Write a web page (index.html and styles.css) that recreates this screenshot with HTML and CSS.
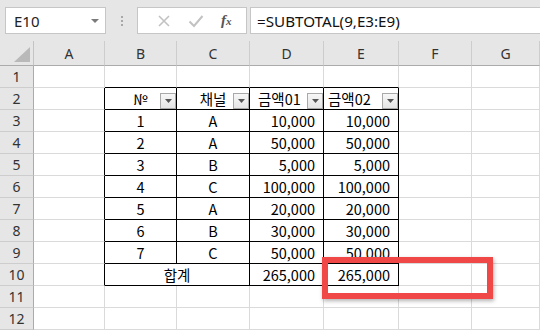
FILE: index.html
```html
<!DOCTYPE html>
<html lang="ko">
<head>
<meta charset="utf-8">
<title>SUBTOTAL</title>
<link rel="stylesheet" href="styles.css">
</head>
<body>

<div class="topbar">
	<div class="namebox">
		<span>E10</span>
		<svg class="drop" width="8" height="4" viewBox="0 0 8 4"><path d="M0 0h8L4 4z" fill="#7a7a7a"/></svg>
	</div>
	<div class="grip">
		<i></i><i></i><i></i>
	</div>
	<div class="fxbtns">
		<svg width="14" height="14" viewBox="0 0 14 14"><path d="M2 2l10 10M12 2L2 12" stroke="#c2c2c2" stroke-width="1.6" fill="none"/></svg>
		<svg width="16" height="14" viewBox="0 0 16 14"><path d="M1.5 7.5l4.5 4.5 8.5-10" stroke="#c2c2c2" stroke-width="2" fill="none"/></svg>
		<span class="fx">f<small>x</small></span>
	</div>
	<div class="formula">=SUBTOTAL(9,E3:E9)</div>
</div><!-- topbar -->

<div class="sheet">
	<!-- column headers -->
	<div class="corner"><svg width="16" height="15" viewBox="0 0 16 15"><path d="M16 0v15H0z" fill="#b9b9b9"/></svg></div>
	<div class="h">A</div><div class="h">B</div><div class="h">C</div><div class="h">D</div><div class="h">E</div><div class="h">F</div><div class="h">G</div>

	<!-- 1 -->
	<div class="r">1</div>
	<div class="c"></div><div class="c tt"></div><div class="c tt"></div><div class="c tt"></div><div class="c tt"></div><div class="c"></div><div class="c"></div>

	<!-- 2 : table header -->
	<div class="r">2</div>
	<div class="c tl"></div>
	<div class="c t hd mid">№<span class="flt"><svg width="7" height="4" viewBox="0 0 7 4"><path d="M0 0h7L3.5 4z" fill="#555"/></svg></span></div>
	<div class="c t hd mid">채널<span class="flt"><svg width="7" height="4" viewBox="0 0 7 4"><path d="M0 0h7L3.5 4z" fill="#555"/></svg></span></div>
	<div class="c t hd pl8">금액01<span class="flt"><svg width="7" height="4" viewBox="0 0 7 4"><path d="M0 0h7L3.5 4z" fill="#555"/></svg></span></div>
	<div class="c t hd pl4">금액02<span class="flt"><svg width="7" height="4" viewBox="0 0 7 4"><path d="M0 0h7L3.5 4z" fill="#555"/></svg></span></div>
	<div class="c"></div><div class="c"></div>

	<div class="r">3</div>
	<div class="c tl"></div><div class="c t mid">1</div><div class="c t mid">A</div><div class="c t num">10,000</div><div class="c t num">10,000</div><div class="c"></div><div class="c"></div>

	<div class="r">4</div>
	<div class="c tl"></div><div class="c t mid">2</div><div class="c t mid">A</div><div class="c t num">50,000</div><div class="c t num">50,000</div><div class="c"></div><div class="c"></div>

	<div class="r">5</div>
	<div class="c tl"></div><div class="c t mid">3</div><div class="c t mid">B</div><div class="c t num">5,000</div><div class="c t num">5,000</div><div class="c"></div><div class="c"></div>

	<div class="r">6</div>
	<div class="c tl"></div><div class="c t mid">4</div><div class="c t mid">C</div><div class="c t num">100,000</div><div class="c t num">100,000</div><div class="c"></div><div class="c"></div>

	<div class="r">7</div>
	<div class="c tl"></div><div class="c t mid">5</div><div class="c t mid">A</div><div class="c t num">20,000</div><div class="c t num">20,000</div><div class="c"></div><div class="c"></div>

	<div class="r">8</div>
	<div class="c tl"></div><div class="c t mid">6</div><div class="c t mid">B</div><div class="c t num">30,000</div><div class="c t num">30,000</div><div class="c"></div><div class="c"></div>

	<div class="r">9</div>
	<div class="c tl"></div><div class="c t mid">7</div><div class="c t mid">C</div><div class="c t num">50,000</div><div class="c t num">50,000</div><div class="c"></div><div class="c"></div>

	<!-- 10 : total -->
	<div class="r">10</div>
	<div class="c tl"></div><div class="c t mid span2">합계</div><div class="c t num">265,000</div><div class="c t num">265,000</div><div class="c"></div><div class="c"></div>

	<div class="r">11</div>
	<div class="c"></div><div class="c"></div><div class="c"></div><div class="c"></div><div class="c"></div><div class="c"></div><div class="c"></div>

	<div class="r">12</div>
	<div class="c"></div><div class="c"></div><div class="c"></div><div class="c"></div><div class="c"></div><div class="c"></div><div class="c"></div>

	<div class="mark"></div>
</div><!-- sheet -->

</body>
</html>
```

FILE: styles.css
```css
* {
	box-sizing: border-box;
}

body {
	margin: 0; padding: 0;
	width: 540px;
	height: 331px;
	overflow: hidden;
	background: #fff;
	font-family: "Noto Sans CJK KR", "Noto Sans", sans-serif;
	color: #000;
}

/* formula bar */
.topbar {
	display: flex;
	align-items: center;
	height: 41px;
	padding: 0 0 0 5px;
	background: #e6e6e6;
}

.namebox {
	display: flex;
	align-items: center;
	justify-content: space-between;
	width: 101px;
	height: 27px;
	padding: 0 6px 0 8px;
	background: #fff;
	border: 1px solid #c6c6c6;
	font-family: "Noto Sans", sans-serif;
	font-size: 15px;
	color: #222;
}

.grip {
	display: flex;
	flex-direction: column;
	align-items: center;
	justify-content: center;
	gap: 2px;
	width: 31px;
	height: 27px;
}

	.grip i {
		display: block;
		width: 2px;
		height: 2px;
		background: #a8a8a8;
	}

.fxbtns {
	display: flex;
	align-items: center;
	justify-content: space-around;
	width: 110px;
	height: 27px;
	padding: 0 6px 0 10px;
	background: #fff;
	border: 1px solid #c6c6c6;
}

	.fxbtns .fx {
		font-family: "Liberation Serif", serif;
		font-style: italic;
		font-weight: bold;
		font-size: 15px;
		color: #555;
	}

	.fxbtns .fx small {
		font-size: 11px;
	}

.formula {
	flex: 1;
	display: flex;
	align-items: center;
	height: 27px;
	margin: 0 -2px 0 3px;
	padding-left: 6px;
	background: #fff;
	border: 1px solid #c6c6c6;
	font-family: "Noto Sans", sans-serif;
	font-size: 15.2px;
	color: #111;
}

/* sheet grid */
.sheet {
	position: relative;
	display: grid;
	grid-template-columns: 34px 71px 72px 73px 74px 75px 73px 1fr;
	grid-template-rows: 25px repeat(12, 22px);
	font-size: 14.5px;
}

.corner {
	display: flex;
	align-items: flex-end;
	justify-content: flex-end;
	padding: 0 3px 3px 0;
	background: #e6e6e6;
	border-right: 1px solid #c4c4c4;
	border-bottom: 1px solid #ababab;
}

.h {
	display: flex;
	align-items: center;
	justify-content: center;
	background: #e6e6e6;
	border-right: 1px solid #cdcdcd;
	border-bottom: 1px solid #ababab;
	font-family: "Noto Sans", sans-serif;
	font-size: 14px;
	color: #333;
}

.r {
	display: flex;
	align-items: center;
	justify-content: center;
	background: #e6e6e6;
	border-right: 1px solid #ababab;
	border-bottom: 1px solid #cdcdcd;
	font-family: "Noto Sans", sans-serif;
	font-size: 14px;
	color: #333;
}

.c {
	position: relative;
	display: flex;
	align-items: center;
	padding-top: 1px;
	border-right: 1px solid #dadada;
	border-bottom: 1px solid #dadada;
	line-height: 1;
	white-space: nowrap;
}

	.c.t {
		border-right-color: #000;
		border-bottom-color: #000;
	}

	.c.tt {
		border-bottom-color: #000;
	}

	.c.tl {
		border-right-color: #000;
	}

.mid {
	justify-content: center;
}

.num {
	justify-content: flex-end;
	padding-right: 8px;
}

.pl8 {
	padding-left: 8px;
}

.pl4 {
	padding-left: 4px;
}

.span2 {
	grid-column: span 2;
}

/* filter buttons */
.flt {
	position: absolute;
	right: 0;
	bottom: 0;
	display: flex;
	align-items: center;
	justify-content: center;
	width: 16px;
	height: 16px;
	background: linear-gradient(#f7f7f7, #e4e4e4);
	border: 1px solid #a9a9a9;
}

/* red highlight round E10 */
.mark {
	position: absolute;
	left: 322px;
	top: 216px;
	width: 171px;
	height: 42px;
	border: 6px solid #f04747;
	box-shadow: 1px 2px 4px rgba(0, 0, 0, .3);
}
```
